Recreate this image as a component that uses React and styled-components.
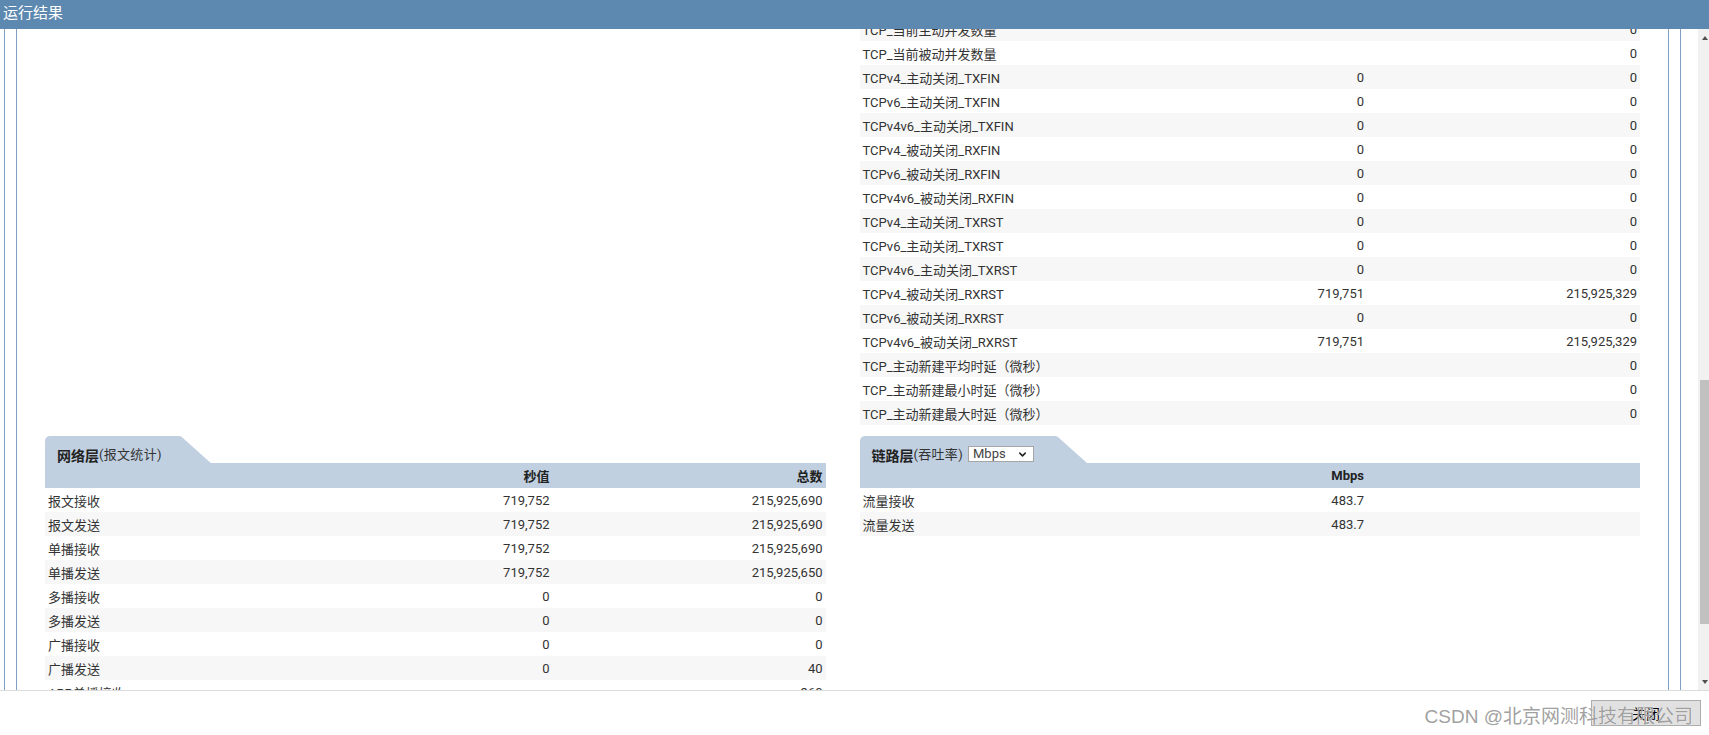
import React, { useLayoutEffect, useRef } from "react";
import styled, { createGlobalStyle } from "styled-components";
import { ChevronDown } from "lucide-react";

const GlobalStyle = createGlobalStyle`
  html, body { margin: 0; padding: 0; overflow: hidden; background: #fff; }
  * { box-sizing: border-box; }
`;

const Page = styled.div`
  width: 1709px;
  height: 735px;
  display: flex;
  flex-direction: column;
  font-family: Roboto, "Noto Sans CJK SC", sans-serif;
  color: #333;
`;

const TitleBar = styled.div`
  height: 29px;
  flex: none;
  background: #5d88b0;
  color: #fff;
  font-family: "Noto Sans CJK SC", sans-serif;
  font-size: 15px;
  line-height: 20px;
  padding: 2px 3px 0;
`;

const Body = styled.div`
  flex: 1;
  min-height: 0;
  display: flex;
`;

const ScrollArea = styled.div`
  flex: 1;
  overflow: hidden;
`;

const Frame = styled.div`
  margin: 0 17px 0 4px;
  border-left: 1px solid #819fc2;
  border-right: 1px solid #819fc2;
  min-height: 100%;
`;

const InnerFrame = styled.div`
  margin: 0 11px;
  border-left: 1px solid #819fc2;
  border-right: 1px solid #819fc2;
`;

const Content = styled.div`
  display: grid;
  grid-template-columns: 1fr 1fr;
  column-gap: 34px;
  row-gap: 11px;
  padding: 0 28px 40px;
`;

const Section = styled.section`
  display: flex;
  flex-direction: column;
`;

const TabBar = styled.div`
  display: flex;
  height: 27px;
`;

const Tab = styled.div`
  display: flex;
  align-items: flex-end;
  background: #c1d0e1;
  border-top-left-radius: 5px;
  padding: 0 49px 0 12px;
  clip-path: polygon(0 0, calc(100% - 31px) 0, calc(100% - 29px) 1px, 100% 100%, 0 100%);
  line-height: 16px;
  white-space: nowrap;
`;

const TabTitle = styled.b`
  font-family: "Noto Sans CJK SC", sans-serif;
  font-size: 14px;
  font-weight: 700;
  color: #222;
`;

const TabNote = styled.span`
  font-family: Roboto, "Noto Sans CJK SC", sans-serif;
  font-size: 13px;
  letter-spacing: 0.3px;
  color: #333;
`;

const SelectBox = styled.div`
  display: inline-flex;
  align-items: center;
  justify-content: space-between;
  width: 66px;
  height: 16px;
  margin: 0 4px 1px 5px;
  padding: 0 5px 0 4px;
  border: 1px solid #a6a6a6;
  background: #fff;
  font-size: 13px;
  line-height: 14px;
  color: #444;
`;

const GRID = "1fr 170px 273px";

const HeaderRow = styled.div`
  display: grid;
  grid-template-columns: ${GRID};
  align-items: center;
  height: 25px;
  background: #c1d0e1;
  font-size: 13px;
  font-weight: 700;
  color: #222;
`;

const Row = styled.div`
  display: grid;
  grid-template-columns: ${GRID};
  align-items: center;
  height: 24px;
  font-size: 13px;
  color: #333;
  background: ${(p) => (p.$alt ? "#f7f7f7" : "#fff")};
`;

const Cell = styled.div`
  padding: 0 3px;
  white-space: nowrap;
  overflow: hidden;
  text-align: ${(p) => (p.$num ? "right" : "left")};
`;

const Scrollbar = styled.div`
  width: 11px;
  flex: none;
  background: #f1f1f1;
  display: flex;
  flex-direction: column;
`;

const ArrowBtn = styled.div`
  height: 17px;
  flex: none;
  display: flex;
  align-items: center;
  padding-left: 4px;
  &::before {
    content: "";
    width: 0;
    height: 0;
    border-left: 3.5px solid transparent;
    border-right: 3.5px solid transparent;
    ${(p) =>
      p.$down
        ? "border-top: 4px solid #505050;"
        : "border-bottom: 4px solid #505050;"}
  }
`;

const Track = styled.div`
  flex: 1;
  padding-top: 334px;
`;

const Thumb = styled.div`
  height: 244px;
  margin-left: 2px;
  background: #c1c1c1;
`;

const Footer = styled.div`
  position: relative;
  height: 45px;
  flex: none;
  border-top: 1px solid #dcdcdc;
  display: flex;
  justify-content: flex-end;
  align-items: flex-start;
  padding: 9px 8px 0 0;
`;

const CloseButton = styled.button`
  width: 110px;
  height: 26px;
  border: 1px solid #adadad;
  background: #e1e1e1;
  font-family: "Noto Sans CJK SC", sans-serif;
  font-size: 14px;
  color: #000;
  padding: 0;
`;

const Watermark = styled.div`
  position: absolute;
  right: 16px;
  top: 15px;
  font-family: "Liberation Sans", "Noto Sans CJK SC", sans-serif;
  font-size: 19px;
  line-height: 22px;
  color: rgba(135, 135, 135, 0.8);
  text-shadow: 0 0 1px #fff;
  pointer-events: none;
  white-space: nowrap;
`;

const tcpRows = [
  ["TCP_当前主动并发数量", "", "0"],
  ["TCP_当前被动并发数量", "", "0"],
  ["TCPv4_主动关闭_TXFIN", "0", "0"],
  ["TCPv6_主动关闭_TXFIN", "0", "0"],
  ["TCPv4v6_主动关闭_TXFIN", "0", "0"],
  ["TCPv4_被动关闭_RXFIN", "0", "0"],
  ["TCPv6_被动关闭_RXFIN", "0", "0"],
  ["TCPv4v6_被动关闭_RXFIN", "0", "0"],
  ["TCPv4_主动关闭_TXRST", "0", "0"],
  ["TCPv6_主动关闭_TXRST", "0", "0"],
  ["TCPv4v6_主动关闭_TXRST", "0", "0"],
  ["TCPv4_被动关闭_RXRST", "719,751", "215,925,329"],
  ["TCPv6_被动关闭_RXRST", "0", "0"],
  ["TCPv4v6_被动关闭_RXRST", "719,751", "215,925,329"],
  ["TCP_主动新建平均时延（微秒）", "", "0"],
  ["TCP_主动新建最小时延（微秒）", "", "0"],
  ["TCP_主动新建最大时延（微秒）", "", "0"],
];

const netRows = [
  ["报文接收", "719,752", "215,925,690"],
  ["报文发送", "719,752", "215,925,690"],
  ["单播接收", "719,752", "215,925,690"],
  ["单播发送", "719,752", "215,925,650"],
  ["多播接收", "0", "0"],
  ["多播发送", "0", "0"],
  ["广播接收", "0", "0"],
  ["广播发送", "0", "40"],
  ["ARP单播接收", "", "360"],
];

const linkRows = [
  ["流量接收", "483.7", ""],
  ["流量发送", "483.7", ""],
];

function DataRows({ rows, altEven }) {
  return rows.map((r, i) => (
    <Row key={r[0]} $alt={altEven ? i % 2 === 0 : i % 2 === 1}>
      <Cell>{r[0]}</Cell>
      <Cell $num>{r[1]}</Cell>
      <Cell $num>{r[2]}</Cell>
    </Row>
  ));
}

export default function App() {
  const scrollRef = useRef(null);
  useLayoutEffect(() => {
    if (scrollRef.current) scrollRef.current.scrollTop = 12;
  }, []);

  return (
    <>
      <GlobalStyle />
      <Page>
        <TitleBar>运行结果</TitleBar>
        <Body>
          <ScrollArea ref={scrollRef}>
            <Frame>
              <InnerFrame>
                <Content>
                  <Section />
                  <Section>
                    <DataRows rows={tcpRows} altEven />
                  </Section>
                  <Section>
                    <TabBar>
                      <Tab>
                        <TabTitle>网络层</TabTitle>
                        <TabNote>(报文统计)</TabNote>
                      </Tab>
                    </TabBar>
                    <HeaderRow>
                      <Cell />
                      <Cell $num>秒值</Cell>
                      <Cell $num>总数</Cell>
                    </HeaderRow>
                    <DataRows rows={netRows} />
                  </Section>
                  <Section>
                    <TabBar>
                      <Tab>
                        <TabTitle>链路层</TabTitle>
                        <TabNote>(吞吐率)</TabNote>
                        <SelectBox>
                          <span>Mbps</span>
                          <ChevronDown size={11} strokeWidth={3.2} color="#222" />
                        </SelectBox>
                      </Tab>
                    </TabBar>
                    <HeaderRow>
                      <Cell />
                      <Cell $num>Mbps</Cell>
                      <Cell $num />
                    </HeaderRow>
                    <DataRows rows={linkRows} />
                  </Section>
                </Content>
              </InnerFrame>
            </Frame>
          </ScrollArea>
          <Scrollbar>
            <ArrowBtn />
            <Track>
              <Thumb />
            </Track>
            <ArrowBtn $down />
          </Scrollbar>
        </Body>
        <Footer>
          <CloseButton>关闭</CloseButton>
          <Watermark>CSDN @北京网测科技有限公司</Watermark>
        </Footer>
      </Page>
    </>
  );
}
